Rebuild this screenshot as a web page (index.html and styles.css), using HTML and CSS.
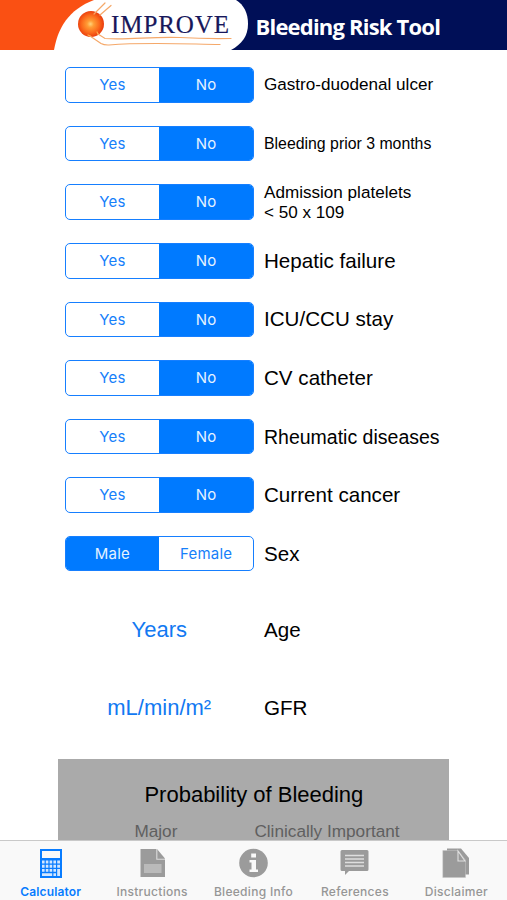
FILE: index.html
```html
<!DOCTYPE html>
<html lang="en">
<head>
<meta charset="utf-8">
<title>IMPROVE Bleeding Risk Tool</title>
<link rel="stylesheet" href="styles.css">
</head>
<body>
<div class="app">
  <header class="header">
    <svg class="logo" width="250" height="50" viewBox="0 0 250 50">
      <defs>
        <radialGradient id="sun" cx="0.48" cy="0.5" r="0.52">
          <stop offset="0" stop-color="#ffd27a"/>
          <stop offset="0.25" stop-color="#ff9c35"/>
          <stop offset="0.65" stop-color="#fb6a1c"/>
          <stop offset="1" stop-color="#e93a0c"/>
        </radialGradient>
      </defs>
      <rect width="100" height="50" fill="#fa5013"/>
      <path d="M54 50C58 28 68 10 94 0H236C244 5 248 13 248 24C248 36 242 44 231 50Z" fill="#fff"/>
      <circle cx="91" cy="24" r="13" fill="url(#sun)"/>
      <g fill="none" stroke="#f5a869" stroke-width="1.200" stroke-linecap="round">
        <path d="M94 14L105 3M100 15L111 5.500"/>
        <path d="M90 36L101 43.500Q104 45.200 109 45C145 42 185 44 220 44.500"/>
        <path d="M98 34L105 38.500C130 40 150 36.500 180 37.500Q205 39 231 38.500"/>
        <path d="M88 35L90 36M97 32L98 34" stroke="#ffad4a"/>
      </g>
      <text class="logo-text" x="111" y="32.500" textLength="118" lengthAdjust="spacing">IMPROVE</text>
    </svg>
    <h1 class="title">Bleeding Risk Tool</h1>
  </header>

  <main class="form">
    <div class="row"><div class="segment"><span>Yes</span><span class="on">No</span></div><label class="label medium">Gastro-duodenal ulcer</label></div>
    <div class="row"><div class="segment"><span>Yes</span><span class="on">No</span></div><label class="label small">Bleeding prior 3 months</label></div>
    <div class="row"><div class="segment"><span>Yes</span><span class="on">No</span></div><label class="label medium">Admission platelets<br>&lt; 50 x 109</label></div>
    <div class="row"><div class="segment"><span>Yes</span><span class="on">No</span></div><label class="label">Hepatic failure</label></div>
    <div class="row"><div class="segment"><span>Yes</span><span class="on">No</span></div><label class="label">ICU/CCU stay</label></div>
    <div class="row"><div class="segment"><span>Yes</span><span class="on">No</span></div><label class="label">CV catheter</label></div>
    <div class="row"><div class="segment"><span>Yes</span><span class="on">No</span></div><label class="label fitted">Rheumatic diseases</label></div>
    <div class="row"><div class="segment"><span>Yes</span><span class="on">No</span></div><label class="label">Current cancer</label></div>
    <div class="row"><div class="segment"><span class="on">Male</span><span>Female</span></div><label class="label">Sex</label></div>
    <div class="row field age"><div class="value">Years</div><label class="label">Age</label></div>
    <div class="row field"><div class="value">mL/min/m²</div><label class="label">GFR</label></div>
    <section class="result">
      <h2 class="result-title">Probability of Bleeding</h2>
      <div class="result-columns"><span>Major</span><span>Clinically Important</span></div>
    </section>
  </main>

  <nav class="tabs">
    <a class="tab active">
      <svg class="icon" width="30" height="30" viewBox="0 0 30 30">
        <path fill="#087cff" d="M4 1H26V30H4Z"/>
        <path fill="#f9f9f9" d="M6 3H24V10H6Z"/>
        <path fill="#d3e7ff" d="M6 12.500h2.600v3H6zM9.800 12.500h2.600v3H9.800zM13.600 12.500h2.600v3h-2.600zM17.400 12.500h2.600v3h-2.600zM21.200 12.500h2.800v3h-2.800zM6 16.800h2.600v3H6zM9.800 16.800h2.600v3H9.800zM13.600 16.800h2.600v3h-2.600zM17.400 16.800h2.600v3h-2.600zM21.200 16.800h2.800v3h-2.800zM6 21h2.600v2.800H6zM9.800 21h2.600v2.800H9.800zM13.600 21h2.600v2.800h-2.600zM17.400 21h2.600v2.800h-2.600zM21.200 21h2.800v7h-2.800zM6 25.200h10.200v2.800H6zM17.400 25.200h2.600v2.800h-2.600z"/>
      </svg>
      <span>Calculator</span>
    </a>
    <a class="tab">
      <svg class="icon" width="30" height="30" viewBox="0 0 30 30">
        <path fill="#9b9b9b" d="M3.500 1H20L28 10.500V29H3.500Z"/>
        <path fill="none" stroke="#dcdcdc" stroke-width="1.100" d="M19.800 1V11.200H28"/>
        <path fill="#bababa" d="M7 16H24.500V25H7Z"/>
      </svg>
      <span>Instructions</span>
    </a>
    <a class="tab">
      <svg class="icon" width="30" height="30" viewBox="0 0 30 30">
        <circle cx="14.500" cy="15" r="14.300" fill="#9b9b9b"/>
        <path fill="#f9f9f9" d="M12.200 5.500H17V9.500H12.200ZM10.500 12H17V21.500H19V24H10.500V21.500H12.500V14.500H10.500Z"/>
      </svg>
      <span>Bleeding Info</span>
    </a>
    <a class="tab">
      <svg class="icon" width="30" height="30" viewBox="0 0 30 30">
        <path fill="#9b9b9b" d="M2 2H27Q28.500 2 28.500 3.500V21.500Q28.500 23 27 23H9L5 27V23H2Q.5 23 .5 21.500V3.500Q.5 2 2 2Z"/>
        <path stroke="#dedede" stroke-width="1.400" d="M5 7.500H24M5 11H24M5 14.500H24M5 18H24"/>
      </svg>
      <span>References</span>
    </a>
    <a class="tab">
      <svg class="icon" width="30" height="30" viewBox="0 0 30 30">
        <path fill="#9b9b9b" d="M6 .5H20L28 10V26.500H6Z"/>
        <path fill="#9b9b9b" stroke="#c5c5c5" stroke-width=".5" d="M1.800 2.500H17L24.500 12V29.500H1.800Z"/>
        <path fill="#9b9b9b" stroke="#e0e0e0" stroke-width="1.100" d="M17 3V13H24Z"/>
      </svg>
      <span>Disclaimer</span>
    </a>
  </nav>
</div>
</body>
</html>
```
FILE: styles.css
```css
* { box-sizing: border-box; }

body {
  margin: 0;
  background: #fff;
  color: #000;
  font-family: "Liberation Sans", Arial, sans-serif;
}

.app {
  display: flex;
  flex-direction: column;
  height: 900px;
  overflow: hidden;
}

.header {
  display: flex;
  flex: none;
  height: 50px;
  background: #000f57;
}

.logo { display: block; flex: none; }

.logo-text {
  font-family: "Liberation Serif", serif;
  font-size: 25px;
  fill: #17175b;
  stroke: #17175b;
  stroke-width: 0.2px;
}

.title {
  margin: 0 0 0 5.5px;
  color: #fff;
  font: bold 22px/52px "Open Sans", sans-serif;
  letter-spacing: -0.8px;
  white-space: nowrap;
}

.form {
  flex: 1;
  min-height: 0;
  padding-top: 5.7px;
  overflow: hidden;
}

.row {
  display: flex;
  align-items: center;
  gap: 10px;
  height: 58.6px;
  padding-left: 64.500px;
}

.segment {
  display: flex;
  flex: none;
  width: 189.500px;
  height: 35.500px;
  overflow: hidden;
  border: 1.500px solid #167fff;
  border-radius: 5px;
  color: #1680fa;
  font: 15px/34px Inter, sans-serif;
  letter-spacing: 0.2px;
  text-align: center;
}

.segment span { flex: 1; }

.segment .on { background: #007aff; color: #e5f2ff; }

.label {
  font-size: 20.600px;
  line-height: 20px;
  white-space: nowrap;
}

.label.medium { font-size: 17.100px; position: relative; top: 0.5px; }
.label.small { font-size: 15.850px; }
.label.fitted { font-size: 19.500px; }

.row.field { height: 78px; }
.row.age { margin-top: 8px; }

.value {
  flex: none;
  width: 189.500px;
  color: #1279f2;
  font-size: 22px;
  text-align: center;
}

.result {
  width: 391px;
  height: 140px;
  margin: 12px 0 0 58.4px;
  padding-top: 22px;
  background: #aaa;
}

.result-title {
  margin: 0;
  font-size: 22px;
  font-weight: normal;
  line-height: 28px;
  text-align: center;
}

.result-columns {
  display: flex;
  gap: 77px;
  margin-top: 11px;
  padding-left: 76px;
  color: #5f5f5f;
  font-size: 17.200px;
  line-height: 22px;
}

.tabs {
  display: flex;
  flex: none;
  height: 60px;
  border-top: 1px solid #c9c9c9;
  background: #f9f9f9;
}

.tab {
  display: flex;
  flex: 1 1 0;
  flex-direction: column;
  align-items: center;
  padding-top: 7px;
  color: #969696;
  font: 500 12px/16px Inter, sans-serif;
  letter-spacing: 0.3px;
  white-space: nowrap;
}

.tab span { margin-top: 6px; }
.tab.active { color: #087cff; font-weight: 600; letter-spacing: 0.15px; }
.icon { display: block; flex: none; }
```
